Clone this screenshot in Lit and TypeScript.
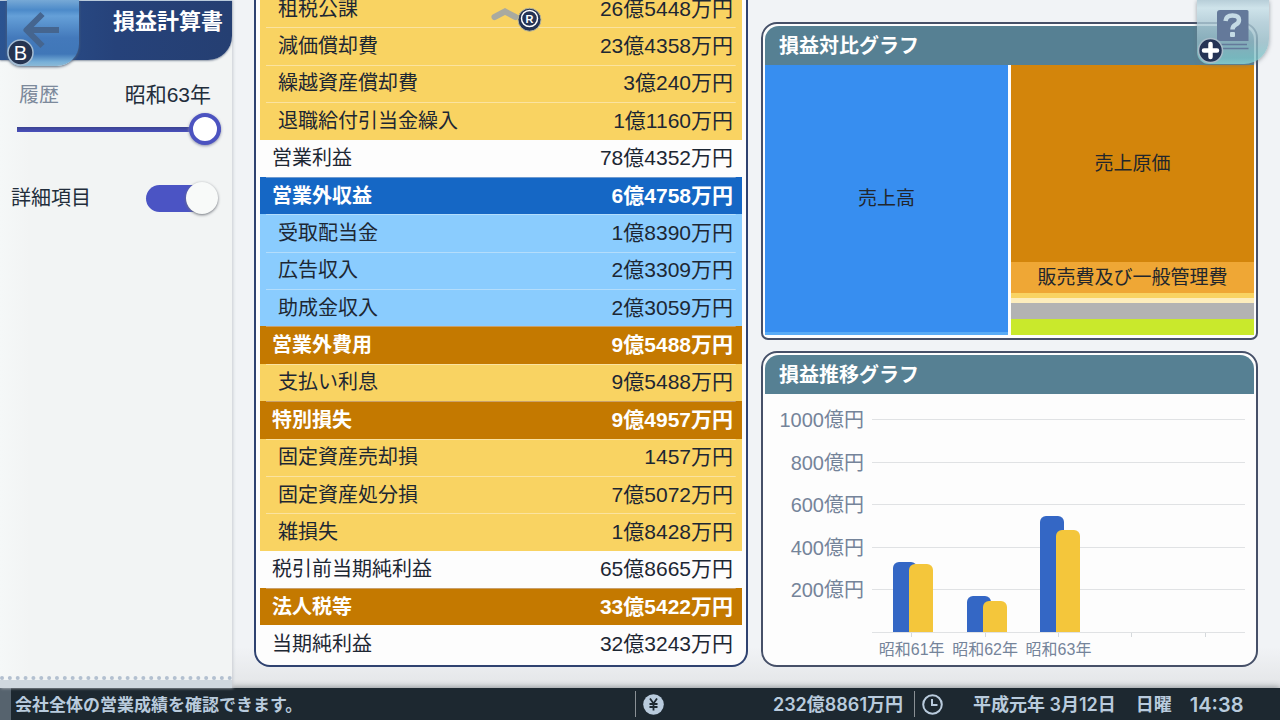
import { LitElement, html, css } from "lit";
import { customElement, property, state } from "lit/decorators.js";
import { styleMap } from "lit/directives/style-map.js";

type Kind = "total" | "income" | "income-sub" | "expense" | "expense-sub";

const ROWS: [Kind, string, string][] = [
  ["expense-sub", "租税公課", "26億5448万円"],
  ["expense-sub", "減価償却費", "23億4358万円"],
  ["expense-sub", "繰越資産償却費", "3億240万円"],
  ["expense-sub", "退職給付引当金繰入", "1億1160万円"],
  ["total", "営業利益", "78億4352万円"],
  ["income", "営業外収益", "6億4758万円"],
  ["income-sub", "受取配当金", "1億8390万円"],
  ["income-sub", "広告収入", "2億3309万円"],
  ["income-sub", "助成金収入", "2億3059万円"],
  ["expense", "営業外費用", "9億5488万円"],
  ["expense-sub", "支払い利息", "9億5488万円"],
  ["expense", "特別損失", "9億4957万円"],
  ["expense-sub", "固定資産売却損", "1457万円"],
  ["expense-sub", "固定資産処分損", "7億5072万円"],
  ["expense-sub", "雑損失", "1億8428万円"],
  ["total", "税引前当期純利益", "65億8665万円"],
  ["expense", "法人税等", "33億5422万円"],
  ["total", "当期純利益", "32億3243万円"],
];

@customElement("statement-table")
class StatementTable extends LitElement {
  static styles = css`
    :host {
      display: block;
      min-height: 0;
      overflow: hidden;
      border: solid #2f4270;
      border-width: 0 2px 2px;
      border-radius: 0 0 16px 16px;
      background: #fdfdfd;
      padding: 0 4px 2px;
    }
    table {
      width: 100%;
      height: calc(100% + 10px);
      margin-top: -10px;
      border-collapse: collapse;
      color: #1d2733;
    }
    th,
    td {
      padding: 0 9px 0 12px;
      font-weight: 400;
      line-height: 24px;
      white-space: nowrap;
    }
    th { text-align: left; }
    td {
      text-align: right;
      font-size: 21px;
    }
    tr {
      background-repeat: no-repeat;
      background-position: center top;
      background-size: calc(100% - 12px) 1px;
    }
    .income,
    .expense { color: #fff; }
    .income th,
    .income td,
    .expense th,
    .expense td { font-weight: 700; }
    .income {
      background-color: #1567c5;
      background-image: linear-gradient(#6f9bd0, #6f9bd0);
    }
    .expense {
      background-color: #c47900;
      background-image: linear-gradient(#c9a06c, #c9a06c);
    }
    .income-sub {
      background-color: #8accfe;
      background-image: linear-gradient(#b4ddfb, #b4ddfb);
    }
    .expense-sub {
      background-color: #f9d362;
      background-image: linear-gradient(#fbe3a0, #fbe3a0);
    }
    .income-sub th,
    .expense-sub th { padding-left: 18px; }
  `;
  render() {
    return html`<table>
      <tbody>
        ${ROWS.map(
          ([kind, name, amount]) => html`<tr class=${kind}>
            <th scope="row">${name}</th>
            <td>${amount}</td>
          </tr>`
        )}
      </tbody>
    </table>`;
  }
}

@customElement("graph-panel")
class GraphPanel extends LitElement {
  @property() heading = "";
  static styles = css`
    :host {
      display: flex;
      flex-direction: column;
      min-height: 0;
      border: 2px solid #465068;
      border-radius: 16px;
      background: #fdfdfd;
      padding: 2px;
    }
    h2 {
      margin: 0;
      padding: 2px 14px 0;
      font-size: 20px;
      font-weight: 700;
      line-height: 37px;
      color: #fff;
      background: #568093;
      border-radius: 14px 14px 0 0;
    }
    .body {
      flex: 1;
      min-height: 0;
      display: flex;
    }
  `;
  render() {
    return html`<h2>${this.heading}</h2>
      <div class="body"><slot></slot></div>`;
  }
}

@customElement("balance-chart")
class BalanceChart extends LitElement {
  static styles = css`
    :host {
      flex: 1;
      display: flex;
      gap: 3px;
      color: #22262c;
      font-size: 19px;
    }
    .stack {
      flex: 1;
      display: flex;
      flex-direction: column;
    }
    .block {
      flex-basis: 0;
      min-height: 0;
      display: flex;
      align-items: center;
      justify-content: center;
      line-height: 24px;
      white-space: nowrap;
    }
  `;
  private stacks: [string, number, string][][] = [
    [
      ["売上高", 267, "#378ef0"],
      ["", 3, "#59abf5"],
    ],
    [
      ["売上原価", 197, "#d3850b"],
      ["販売費及び一般管理費", 31, "#efa735"],
      ["", 5, "#f9d362"],
      ["", 5, "#fdedbd"],
      ["", 16, "#b3b3b3"],
      ["", 16, "#c9e92c"],
    ],
  ];
  render() {
    return this.stacks.map(
      (stack) => html`<div class="stack">
        ${stack.map(
          ([label, share, color]) =>
            html`<div class="block" style=${styleMap({ flexGrow: String(share), background: color })}>${label}</div>`
        )}
      </div>`
    );
  }
}

@customElement("trend-chart")
class TrendChart extends LitElement {
  static styles = css`
    :host {
      flex: 1;
      display: grid;
      grid-template-columns: 99px 1fr;
      grid-template-rows: 1fr 30px;
      column-gap: 8px;
      padding: 25px 9px 0 0;
      color: #75849a;
    }
    .scale,
    .lines {
      display: flex;
      flex-direction: column;
      justify-content: space-between;
    }
    .scale { text-align: right; }
    .scale span {
      height: 1px;
      line-height: 2px;
      white-space: nowrap;
    }
    .plot { display: grid; }
    .lines,
    .bars { grid-area: 1 / 1; }
    .lines div {
      height: 1px;
      background: #e0e2e4;
    }
    .bars,
    .years {
      display: grid;
      grid-template-columns: repeat(5, 1fr);
      padding: 0 3px;
    }
    .bars { padding-bottom: 1px; }
    .pair {
      display: flex;
      align-items: flex-end;
      justify-content: center;
      padding-left: 3px;
    }
    .bar {
      width: 24px;
      border-radius: 6px 6px 0 0;
    }
    .sales { background: #3467c5; }
    .cost {
      background: #f4c63b;
      margin-left: -8px;
    }
    .years {
      grid-column: 2;
      font-size: 16px;
    }
    .year {
      display: flex;
      flex-direction: column;
      align-items: center;
      line-height: 26px;
      white-space: nowrap;
    }
    .year::before {
      content: "";
      width: 1px;
      height: 4px;
      background: #d5d9dc;
    }
  `;
  private years = [
    { name: "昭和61年", sales: 328, cost: 319 },
    { name: "昭和62年", sales: 170, cost: 147 },
    { name: "昭和63年", sales: 543, cost: 478 },
    { name: "", sales: 0, cost: 0 },
    { name: "", sales: 0, cost: 0 },
  ];
  render() {
    const bar = (kind: string, value: number) =>
      html`<div class="bar ${kind}" style=${styleMap({ height: value / 10 + "%" })}></div>`;
    return html`
      <div class="scale">
        ${[1000, 800, 600, 400, 200].map((v) => html`<span>${v}億円</span>`)}
        <span></span>
      </div>
      <div class="plot">
        <div class="lines">${[0, 1, 2, 3, 4, 5].map(() => html`<div></div>`)}</div>
        <div class="bars">
          ${this.years.map((y) => html`<div class="pair">${bar("sales", y.sales)}${bar("cost", y.cost)}</div>`)}
        </div>
      </div>
      <div class="years">${this.years.map((y) => html`<div class="year">${y.name}</div>`)}</div>
    `;
  }
}

@customElement("side-bar")
class SideBar extends LitElement {
  @state() private detail = true;
  static styles = css`
    :host {
      position: relative;
      display: flex;
      flex-direction: column;
      background: linear-gradient(90deg, #f5f8f8, #f2f4f4 30px);
      box-shadow: 1px 0 3px #c9ccd2;
      color: #222d3b;
    }
    header {
      height: 60px;
      box-sizing: border-box;
      padding: 6px 9px 0 0;
      text-align: right;
      background: linear-gradient(90deg, #2b5390, #26427a 50%, #253f72);
      border-top: 1px solid #b9cadb;
      border-radius: 0 0 24px 0;
      box-shadow: 0 1px 2px #8b95a5;
    }
    h1 {
      margin: 0;
      font-size: 22px;
      font-weight: 700;
      line-height: 30px;
      color: #fff;
    }
    .back {
      position: absolute;
      left: 7px;
      top: 0;
      width: 72px;
      height: 66px;
      padding: 0;
      border: 0;
      border-radius: 0 0 22px 14px;
      background: linear-gradient(#77a9d6, #4c8ac9 10px, #65a0d8 16px, #4379bb 38px, #4077b8 54px, #78b0d8 62px, #8bb9d6);
      box-shadow: 0 1px 3px #55657a;
    }
    .back svg {
      display: block;
      overflow: visible;
    }
    .controls {
      flex: 1;
      padding: 22px 11px 0;
    }
    .row {
      display: flex;
      justify-content: space-between;
      align-items: center;
      line-height: 26px;
    }
    .history { padding: 0 10px 0 8px; }
    .history label { color: #7c899b; }
    output { font-size: 21px; }
    input {
      appearance: none;
      margin: 0;
      display: block;
    }
    .slider {
      width: calc(100% - 6px);
      height: 32px;
      margin: 5px 0 36px 6px;
      background: linear-gradient(#3a4390, #4b50bd) center / 100% 5px no-repeat;
    }
    .slider::-webkit-slider-thumb {
      appearance: none;
      box-sizing: border-box;
      width: 32px;
      height: 32px;
      border: 4px solid #4c53c0;
      border-radius: 50%;
      background: #fff;
      box-shadow: 0 1px 3px #8c90a8;
    }
    .detail {
      min-height: 34px;
      padding-right: 7px;
    }
    .toggle {
      display: flex;
      align-items: center;
      width: 68px;
      height: 27px;
      background: #4b54c4;
      border-radius: 14px;
    }
    .toggle::before {
      content: "";
      width: 32px;
      height: 32px;
      border-radius: 50%;
      background: #f8faf9;
      box-shadow: 0 1px 3px #70747c;
    }
    .toggle:checked { justify-content: flex-end; }
    .toggle:checked::before { margin-right: -4px; }
    .foot {
      height: 8px;
      border-top: 4px dotted #b3c0d0;
      background: #cfd8df;
      background-clip: padding-box;
    }
  `;
  render() {
    return html`
      <header><h1>損益計算書</h1></header>
      <button class="back" aria-label="戻る">
        <svg width="72" height="66" viewBox="0 0 72 66">
          <path d="M52 30H22M35.500 14L19.500 30L35.500 46" fill="none" stroke="#45658f" stroke-width="6" stroke-linejoin="round" />
          <circle cx="13.500" cy="52.500" r="12.500" fill="#253451" stroke="#a6bdd3" stroke-width="1.500" />
          <text x="13.500" y="60" text-anchor="middle" font-size="20" fill="#fff">B</text>
        </svg>
      </button>
      <div class="controls">
        <div class="row history">
          <label for="history">履歴</label>
          <output for="history">昭和63年</output>
        </div>
        <input class="slider" id="history" type="range" min="61" max="63" value="63" />
        <div class="row detail">
          <label for="detail">詳細項目</label>
          <input
            class="toggle"
            id="detail"
            type="checkbox"
            .checked=${this.detail}
            @change=${() => (this.detail = !this.detail)}
          />
        </div>
      </div>
      <div class="foot"></div>
    `;
  }
}

@customElement("status-bar")
class StatusBar extends LitElement {
  static styles = css`
    :host {
      display: grid;
      grid-template-columns: 1fr 279px 366px;
      align-items: center;
      height: 32px;
      box-sizing: border-box;
      border-left: 11px solid #56636e;
      background: #1d2830;
      box-shadow: 0 -1px 6px #8d9296;
      color: #b9cbdd;
      font-family: Inter, "Noto Sans CJK JP", sans-serif;
      font-size: 18px;
      font-weight: 600;
      line-height: 24px;
      white-space: nowrap;
    }
    .message {
      padding: 2px 0 0 4px;
      font-size: 17px;
    }
    .segment {
      display: flex;
      align-items: center;
      border-left: 1px solid #8a9095;
      padding-left: 7px;
    }
    .money {
      justify-content: space-between;
      padding-right: 11px;
    }
    svg { display: block; }
    .text { padding-top: 2px; }
    .date { margin: 0 20px 0 30px; }
    .clock {
      margin-left: 18px;
      font-size: 20px;
    }
  `;
  render() {
    return html`
      <div class="message">会社全体の営業成績を確認できます。</div>
      <div class="segment money">
        <svg width="21" height="21" viewBox="0 0 21 21">
          <circle cx="10.500" cy="10.500" r="10.300" fill="#b9cbdd" />
          <path d="M7 4.500L10.500 9.500L14 4.500M10.500 9.500V16.500M6.500 10H14.500M6.500 13H14.500" fill="none" stroke="#1d2830" stroke-width="1.800" />
        </svg>
        <span class="text">232億8861万円</span>
      </div>
      <div class="segment">
        <svg width="21" height="21" viewBox="0 0 21 21">
          <circle cx="10.500" cy="10.500" r="9.300" fill="none" stroke="#b9cbdd" stroke-width="2" />
          <path d="M10 5V11H15.500" fill="none" stroke="#b9cbdd" stroke-width="2" />
        </svg>
        <span class="text date">平成元年 3月12日</span>
        <span class="text">日曜</span>
        <span class="text clock">14:38</span>
      </div>
    `;
  }
}

@customElement("app-root")
class AppRoot extends LitElement {
  static styles = css`
    :host {
      position: relative;
      display: grid;
      grid-template-rows: minmax(0, 1fr) auto;
      height: 100vh;
      overflow: hidden;
      font-family: "Liberation Sans", "Noto Sans CJK JP", sans-serif;
      font-size: 20px;
      background: #f1f3f6;
    }
    .page {
      display: grid;
      grid-template-columns: 232px minmax(0, 1fr);
      min-height: 0;
    }
    main {
      display: grid;
      grid-template-columns: minmax(0, 494fr) minmax(0, 497fr);
      gap: 13px;
      padding: 0 22px 21px;
      min-height: 0;
      background: linear-gradient(#f1f3f6 94%, #e3e5e7);
    }
    .graphs {
      display: grid;
      grid-template-rows: minmax(0, 318fr) minmax(0, 316fr);
      gap: 11px;
      padding-top: 22px;
      min-height: 0;
    }
    .balance {
      border-radius: 16px 16px 7px 7px;
      padding-bottom: 3px;
    }
    .scroll {
      position: absolute;
      left: 491px;
      top: 4px;
      padding: 0;
      border: 0;
      background: none;
    }
    .help {
      position: absolute;
      right: 11px;
      top: 0;
      width: 72px;
      height: 64px;
      padding: 0;
      border: 0;
      border-radius: 0 0 25px 12px;
      background: linear-gradient(#a9c5d1cc, #c8e0e8d9 8px, #aecbd6d0 22px, #93b9c4c8 42px, #7fc4c8cc 58px, #86cfcfdd);
      box-shadow: 0 1px 4px #68757faa;
    }
    svg {
      display: block;
      overflow: visible;
    }
  `;
  render() {
    return html`
      <div class="page">
        <side-bar></side-bar>
        <main>
          <statement-table></statement-table>
          <div class="graphs">
            <graph-panel class="balance" heading="損益対比グラフ"><balance-chart></balance-chart></graph-panel>
            <graph-panel heading="損益推移グラフ"><trend-chart></trend-chart></graph-panel>
          </div>
        </main>
      </div>
      <status-bar></status-bar>
      <button class="scroll" aria-label="上へスクロール">
        <svg width="52" height="30" viewBox="0 0 52 30">
          <path d="M3.500 13L14 7.500L24.500 13" fill="none" stroke="#a9aaa0" stroke-width="6" stroke-linecap="round" stroke-linejoin="miter" />
          <circle cx="38.500" cy="15.700" r="11.500" fill="#253355" stroke="#b9b69a" stroke-width="1" />
          <circle cx="38.500" cy="14.500" r="8" fill="none" stroke="#fff" stroke-width="1.500" />
          <text x="38.500" y="18.500" text-anchor="middle" font-size="11" font-weight="700" fill="#fff">R</text>
        </svg>
      </button>
      <button class="help" aria-label="ヘルプ">
        <svg width="72" height="64" viewBox="0 0 72 64">
          <path d="M23 10H50Q51.500 10 51.500 11.500V41H20V13Q20 10 23 10Z" fill="#64799a" />
          <path d="M22 44.500H50M22 48.500H51.500" stroke="#64799a" stroke-width="1.500" />
          <path d="M28.500 21Q29 15.500 35.500 15.500Q42 15.500 42 20Q42 23 38.500 24.800Q35.500 26.500 35.500 29.500" fill="none" stroke="#c5dbe5" stroke-width="4.500" />
          <rect x="33" y="32" width="5" height="5" rx="1" fill="#c5dbe5" />
          <circle cx="13.500" cy="50.500" r="12" fill="#253355" stroke="#a9bcc8" stroke-width="1.500" />
          <path d="M13.500 44V57M7 50.500H20" stroke="#fff" stroke-width="4.500" stroke-linecap="round" />
        </svg>
      </button>
    `;
  }
}
